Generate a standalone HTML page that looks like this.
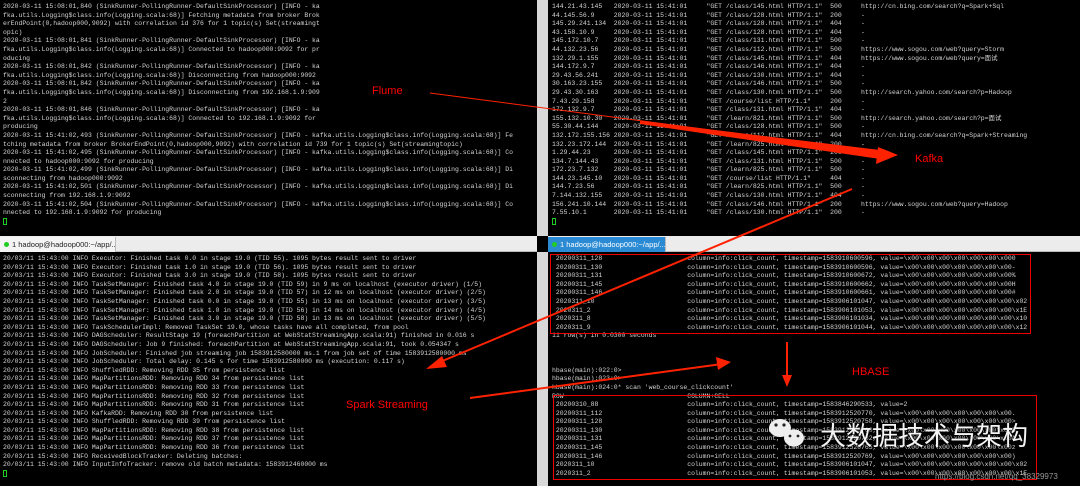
<!DOCTYPE html>
<html><head><meta charset="utf-8"><style>
*{margin:0;padding:0;box-sizing:border-box}
body{width:1080px;height:486px;background:#000;position:relative;overflow:hidden;font-family:"Liberation Mono",monospace}
pre{position:absolute;font-family:"Liberation Mono",monospace;font-size:6.45px;line-height:8.6px;color:#d4d4d4;white-space:pre}
.strip{position:absolute;background:#d8d8d8}
.tabbar{position:absolute;height:16px;background:#ececec;border-bottom:1px solid #bbb}
.tab{position:absolute;height:15px;font-family:"Liberation Sans",sans-serif;font-size:7.5px;line-height:15px;padding-left:12px;color:#222;background:#f4f4f4;border-right:1px solid #bbb;white-space:nowrap;overflow:hidden}
.tab.sel{background:#2a8ad4;color:#fff}
.tab:before{content:"";position:absolute;left:4px;top:5px;width:5px;height:5px;border-radius:50%;background:#2c2}
.lbl{position:absolute;color:#f00;font-family:"Liberation Sans",sans-serif;font-size:11px}
.box{position:absolute;border:1.5px solid #e00}
.cur{position:absolute;width:4px;height:7px;border:1px solid #2c2}
</style></head><body>
<pre style="left:3px;top:3px">2020-03-11 15:08:01,840 (SinkRunner-PollingRunner-DefaultSinkProcessor) [INFO - ka
fka.utils.Logging$class.info(Logging.scala:68)] Fetching metadata from broker Brok
erEndPoint(0,hadoop000,9092) with correlation id 376 for 1 topic(s) Set(streamingt
opic)
2020-03-11 15:08:01,841 (SinkRunner-PollingRunner-DefaultSinkProcessor) [INFO - ka
fka.utils.Logging$class.info(Logging.scala:68)] Connected to hadoop000:9092 for pr
oducing
2020-03-11 15:08:01,842 (SinkRunner-PollingRunner-DefaultSinkProcessor) [INFO - ka
fka.utils.Logging$class.info(Logging.scala:68)] Disconnecting from hadoop000:9092
2020-03-11 15:08:01,842 (SinkRunner-PollingRunner-DefaultSinkProcessor) [INFO - ka
fka.utils.Logging$class.info(Logging.scala:68)] Disconnecting from 192.168.1.9:909
2
2020-03-11 15:08:01,846 (SinkRunner-PollingRunner-DefaultSinkProcessor) [INFO - ka
fka.utils.Logging$class.info(Logging.scala:68)] Connected to 192.168.1.9:9092 for
producing
2020-03-11 15:41:02,493 (SinkRunner-PollingRunner-DefaultSinkProcessor) [INFO - kafka.utils.Logging$class.info(Logging.scala:68)] Fe
tching metadata from broker BrokerEndPoint(0,hadoop000,9092) with correlation id 739 for 1 topic(s) Set(streamingtopic)
2020-03-11 15:41:02,495 (SinkRunner-PollingRunner-DefaultSinkProcessor) [INFO - kafka.utils.Logging$class.info(Logging.scala:68)] Co
nnected to hadoop000:9092 for producing
2020-03-11 15:41:02,499 (SinkRunner-PollingRunner-DefaultSinkProcessor) [INFO - kafka.utils.Logging$class.info(Logging.scala:68)] Di
sconnecting from hadoop000:9092
2020-03-11 15:41:02,501 (SinkRunner-PollingRunner-DefaultSinkProcessor) [INFO - kafka.utils.Logging$class.info(Logging.scala:68)] Di
sconnecting from 192.168.1.9:9092
2020-03-11 15:41:02,504 (SinkRunner-PollingRunner-DefaultSinkProcessor) [INFO - kafka.utils.Logging$class.info(Logging.scala:68)] Co
nnected to 192.168.1.9:9092 for producing</pre>
<div class="cur" style="left:3px;top:218px"></div>
<div class="strip" style="left:537px;top:0;width:11px;height:236px"></div>
<div class="strip" style="left:537px;top:252px;width:11px;height:234px"></div>
<pre style="left:552px;top:3px">144.21.43.145   2020-03-11 15:41:01     "GET /class/145.html HTTP/1.1"  500     http://cn.bing.com/search?q=Spark+Sql
44.145.56.9     2020-03-11 15:41:01     "GET /class/128.html HTTP/1.1"  200     -
145.29.241.134  2020-03-11 15:41:01     "GET /class/128.html HTTP/1.1"  404     -
43.158.10.9     2020-03-11 15:41:01     "GET /class/128.html HTTP/1.1"  404     -
145.172.10.7    2020-03-11 15:41:01     "GET /class/131.html HTTP/1.1"  500     -
44.132.23.56    2020-03-11 15:41:01     "GET /class/112.html HTTP/1.1"  500     https://www.sogou.com/web?query=Storm
132.29.1.155    2020-03-11 15:41:01     "GET /class/145.html HTTP/1.1"  404     https://www.sogou.com/web?query=面试
144.172.9.7     2020-03-11 15:41:01     "GET /class/146.html HTTP/1.1"  404     -
29.43.56.241    2020-03-11 15:41:01     "GET /class/130.html HTTP/1.1"  404     -
30.163.23.155   2020-03-11 15:41:01     "GET /class/146.html HTTP/1.1"  500     -
29.43.30.163    2020-03-11 15:41:01     "GET /class/130.html HTTP/1.1"  500     http://search.yahoo.com/search?p=Hadoop
7.43.29.158     2020-03-11 15:41:01     "GET /course/list HTTP/1.1"     200     -
172.132.9.7     2020-03-11 15:41:01     "GET /class/131.html HTTP/1.1"  404     -
155.132.10.30   2020-03-11 15:41:01     "GET /learn/821.html HTTP/1.1"  500     http://search.yahoo.com/search?p=面试
55.30.44.144    2020-03-11 15:41:01     "GET /class/128.html HTTP/1.1"  500     -
132.172.155.156 2020-03-11 15:41:01     "GET /class/112.html HTTP/1.1"  404     http://cn.bing.com/search?q=Spark+Streaming
132.23.172.144  2020-03-11 15:41:01     "GET /learn/825.html HTTP/1.1"  200     -
1.29.44.23      2020-03-11 15:41:01     "GET /class/145.html HTTP/1.1"  200     -
134.7.144.43    2020-03-11 15:41:01     "GET /class/131.html HTTP/1.1"  500     -
172.23.7.132    2020-03-11 15:41:01     "GET /learn/825.html HTTP/1.1"  500     -
144.23.145.10   2020-03-11 15:41:01     "GET /course/list HTTP/1.1"     404     -
144.7.23.56     2020-03-11 15:41:01     "GET /learn/825.html HTTP/1.1"  500     -
7.144.132.155   2020-03-11 15:41:01     "GET /class/130.html HTTP/1.1"  404     -
156.241.10.144  2020-03-11 15:41:01     "GET /class/146.html HTTP/1.1"  200     https://www.sogou.com/web?query=Hadoop
7.55.10.1       2020-03-11 15:41:01     "GET /class/130.html HTTP/1.1"  200     -</pre>
<div class="cur" style="left:552px;top:218px"></div>
<div class="tabbar" style="left:0;top:236px;width:537px"></div>
<div class="tab" style="left:0;top:237px;width:116px">1 hadoop@hadoop000:~/app/... ×</div>
<div class="tabbar" style="left:548px;top:236px;width:532px"></div>
<div class="tab sel" style="left:548px;top:237px;width:118px">1 hadoop@hadoop000:~/app/... ×</div>
<pre style="left:3px;top:255px">20/03/11 15:43:00 INFO Executor: Finished task 0.0 in stage 19.0 (TID 55). 1095 bytes result sent to driver
20/03/11 15:43:00 INFO Executor: Finished task 1.0 in stage 19.0 (TID 56). 1095 bytes result sent to driver
20/03/11 15:43:00 INFO Executor: Finished task 3.0 in stage 19.0 (TID 58). 1095 bytes result sent to driver
20/03/11 15:43:00 INFO TaskSetManager: Finished task 4.0 in stage 19.0 (TID 59) in 9 ms on localhost (executor driver) (1/5)
20/03/11 15:43:00 INFO TaskSetManager: Finished task 2.0 in stage 19.0 (TID 57) in 12 ms on localhost (executor driver) (2/5)
20/03/11 15:43:00 INFO TaskSetManager: Finished task 0.0 in stage 19.0 (TID 55) in 13 ms on localhost (executor driver) (3/5)
20/03/11 15:43:00 INFO TaskSetManager: Finished task 1.0 in stage 19.0 (TID 56) in 14 ms on localhost (executor driver) (4/5)
20/03/11 15:43:00 INFO TaskSetManager: Finished task 3.0 in stage 19.0 (TID 58) in 13 ms on localhost (executor driver) (5/5)
20/03/11 15:43:00 INFO TaskSchedulerImpl: Removed TaskSet 19.0, whose tasks have all completed, from pool
20/03/11 15:43:00 INFO DAGScheduler: ResultStage 19 (foreachPartition at WebStatStreamingApp.scala:91) finished in 0.016 s
20/03/11 15:43:00 INFO DAGScheduler: Job 9 finished: foreachPartition at WebStatStreamingApp.scala:91, took 0.054347 s
20/03/11 15:43:00 INFO JobScheduler: Finished job streaming job 1583912580000 ms.1 from job set of time 1583912580000 ms
20/03/11 15:43:00 INFO JobScheduler: Total delay: 0.145 s for time 1583912580000 ms (execution: 0.117 s)
20/03/11 15:43:00 INFO ShuffledRDD: Removing RDD 35 from persistence list
20/03/11 15:43:00 INFO MapPartitionsRDD: Removing RDD 34 from persistence list
20/03/11 15:43:00 INFO MapPartitionsRDD: Removing RDD 33 from persistence list
20/03/11 15:43:00 INFO MapPartitionsRDD: Removing RDD 32 from persistence list
20/03/11 15:43:00 INFO MapPartitionsRDD: Removing RDD 31 from persistence list
20/03/11 15:43:00 INFO KafkaRDD: Removing RDD 30 from persistence list
20/03/11 15:43:00 INFO ShuffledRDD: Removing RDD 39 from persistence list
20/03/11 15:43:00 INFO MapPartitionsRDD: Removing RDD 38 from persistence list
20/03/11 15:43:00 INFO MapPartitionsRDD: Removing RDD 37 from persistence list
20/03/11 15:43:00 INFO MapPartitionsRDD: Removing RDD 36 from persistence list
20/03/11 15:43:00 INFO ReceivedBlockTracker: Deleting batches:
20/03/11 15:43:00 INFO InputInfoTracker: remove old batch metadata: 1583912460000 ms</pre>
<div class="cur" style="left:3px;top:470px"></div>
<pre style="left:552px;top:255px"> 20200311_128                      column=info:click_count, timestamp=1583910600596, value=\x00\x00\x00\x00\x00\x00\x000
 20200311_130                      column=info:click_count, timestamp=1583910600596, value=\x00\x00\x00\x00\x00\x00\x00-
 20200311_131                      column=info:click_count, timestamp=1583910600672, value=\x00\x00\x00\x00\x00\x00\x00%
 20200311_145                      column=info:click_count, timestamp=1583910600662, value=\x00\x00\x00\x00\x00\x00\x00H
 20200311_146                      column=info:click_count, timestamp=1583910600661, value=\x00\x00\x00\x00\x00\x00\x00#
 2020311_10                        column=info:click_count, timestamp=1583906101047, value=\x00\x00\x00\x00\x00\x00\x00\x02
 2020311_2                         column=info:click_count, timestamp=1583906101053, value=\x00\x00\x00\x00\x00\x00\x00\x1E
 2020311_8                         column=info:click_count, timestamp=1583906101034, value=\x00\x00\x00\x00\x00\x00\x00\x10
 2020311_9                         column=info:click_count, timestamp=1583906101044, value=\x00\x00\x00\x00\x00\x00\x00\x12
11 row(s) in 0.0300 seconds



hbase(main):022:0>
hbase(main):023:0>
hbase(main):024:0* scan 'web_course_clickcount'
ROW                                COLUMN+CELL
 20200310_88                       column=info:click_count, timestamp=1583846290533, value=2
 20200311_112                      column=info:click_count, timestamp=1583912520770, value=\x00\x00\x00\x00\x00\x00\x00.
 20200311_128                      column=info:click_count, timestamp=1583912520758, value=\x00\x00\x00\x00\x00\x00\x00>
 20200311_130                      column=info:click_count, timestamp=1583912520760, value=\x00\x00\x00\x00\x00\x00\x00B
 20200311_131                      column=info:click_count, timestamp=1583912520762, value=\x00\x00\x00\x00\x00\x00\x00A
 20200311_145                      column=info:click_count, timestamp=1583912520765, value=\x00\x00\x00\x00\x00\x00\x00z
 20200311_146                      column=info:click_count, timestamp=1583912520769, value=\x00\x00\x00\x00\x00\x00\x00)
 2020311_10                        column=info:click_count, timestamp=1583906101047, value=\x00\x00\x00\x00\x00\x00\x00\x02
 2020311_2                         column=info:click_count, timestamp=1583906101053, value=\x00\x00\x00\x00\x00\x00\x00\x1E</pre>
<div class="box" style="left:550px;top:254px;width:481px;height:80px"></div>
<div class="box" style="left:553px;top:395px;width:484px;height:85px"></div>
<svg style="position:absolute;left:0;top:0" width="1080" height="486">
<g fill="#f20" stroke="#f20">
<line x1="430" y1="93" x2="893" y2="154" stroke-width="1"/>
<polygon points="640,121 880,150 880,159 640,124" stroke="none"/>
<polygon points="898,155 878,147 876,164" stroke="none"/>
<line x1="852" y1="189" x2="440" y2="362" stroke-width="2"/>
<polygon points="426,369 442,356 447,367" stroke="none"/>
<line x1="470" y1="398" x2="722" y2="364" stroke-width="2"/>
<polygon points="731,362 716,357 718,370" stroke="none"/>
<line x1="787" y1="342" x2="787" y2="377" stroke-width="2"/>
<polygon points="787,387 782,375 792,375" stroke="none"/>
</g>
<g fill="#eee">
<ellipse cx="780" cy="428" rx="11" ry="9"/>
<ellipse cx="794" cy="438" rx="10" ry="8.5"/>
</g>
<g fill="#222"><circle cx="776" cy="425" r="1.6"/><circle cx="784" cy="425" r="1.6"/><circle cx="790" cy="436" r="1.4"/><circle cx="798" cy="436" r="1.4"/></g>
</svg>
<div class="lbl" style="left:372px;top:85px">Flume</div>
<div class="lbl" style="left:915px;top:153px">Kafka</div>
<div class="lbl" style="left:346px;top:399px">Spark Streaming</div>
<div class="lbl" style="left:852px;top:366px">HBASE</div>
<div style="position:absolute;left:820px;top:420px;color:#f4f4f4;font-family:'Noto Sans CJK SC',sans-serif;font-size:26px;line-height:30px;text-shadow:0 0 2px #000">大数据技术与架构</div>
<div style="position:absolute;left:935px;top:472px;color:#999;font-family:'Liberation Sans',sans-serif;font-size:8px">https://blog.csdn.net/qq_38329973</div>
</body></html>
